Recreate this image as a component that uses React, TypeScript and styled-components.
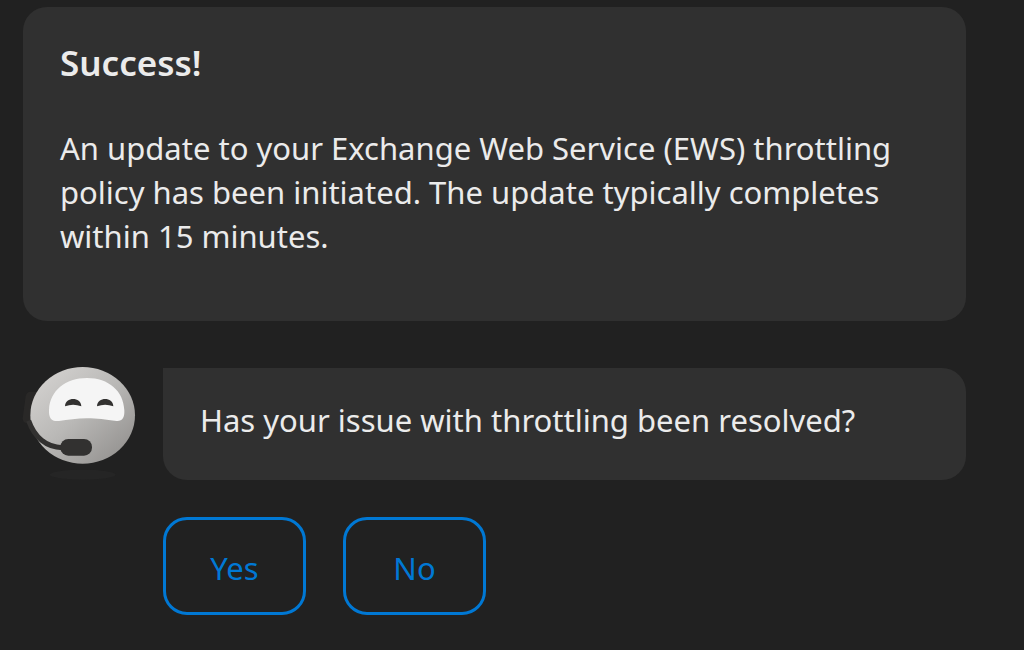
import React from 'react';
import styled, { createGlobalStyle } from 'styled-components';

const GlobalStyle = createGlobalStyle`
  * { box-sizing: border-box; }
  body {
    margin: 0;
    background: #212121;
    color: #ebebeb;
    font-family: 'Segoe UI', 'Noto Sans', 'Open Sans', sans-serif;
    font-size: 31px;
    line-height: 44px;
  }
`;

const Chat = styled.main`
  padding: 7px 58px 34px 23px;
`;

const Bubble = styled.section<{ $reply?: boolean }>`
  flex: 1;
  min-width: 0;
  padding: ${p => (p.$reply ? '30px 37px 38px' : '31px 37px 63px')};
  border-radius: ${p => (p.$reply ? '0 24px 24px 24px' : '24px')};
  background: #303030;
`;

const Title = styled.h1`
  margin: 0 0 38px;
  font-size: 35px;
  font-weight: 600;
  line-height: 50px;
`;

const Text = styled.p`
  margin: 0;
`;

const MessageRow = styled.div`
  display: flex;
  gap: 28px;
  margin-top: 47px;
`;

const Avatar = styled.svg`
  flex: none;
  width: 112px;
  height: 112px;
  overflow: visible;
`;

const Replies = styled.div`
  display: flex;
  gap: 37px;
  margin: 37px 0 0 140px;
`;

const ReplyButton = styled.button`
  min-width: 143px;
  height: 98px;
  padding: 4px 44px 0;
  border: 3px solid #0078d4;
  border-radius: 24px;
  background: transparent;
  color: #0078d4;
  font: inherit;
  cursor: pointer;
`;

const BotAvatar = () => (
  <Avatar viewBox="39 39 336 336" role="img" aria-label="Virtual agent">
    <defs>
      <linearGradient id="head" x1="0.1" y1="0.1" x2="0.85" y2="0.9">
        <stop offset="0" stopColor="#d2d0ce" />
        <stop offset="0.5" stopColor="#b9b8b6" />
        <stop offset="1" stopColor="#979593" />
      </linearGradient>
    </defs>
    <ellipse cx="218" cy="359" rx="99" ry="15" fill="#252525" />
    <path d="M62 110H84V204H50Q38 204 38 190L47 124Q49 110 62 110Z" fill="#292827" />
    <ellipse cx="218" cy="181" rx="157" ry="145" fill="url(#head)" />
    <path
      d="M117 164C120 107 166 69 231 69C296 69 341 108 343 166C344 188 337 199 320 198C286 194 262 190 231 190C200 190 174 195 147 198C123 200 116 188 117 164Z"
      fill="#f5f5f5"
    />
    <path d="M165 154C166 125 213 125 214 154Q189 145 165 154Z" fill="#323130" />
    <path d="M261 154C262 125 309 125 310 154Q285 145 261 154Z" fill="#323130" />
    <path d="M56 197C73 247 109 277 157 278" fill="none" stroke="#323130" strokeWidth="15" />
    <rect x="151" y="252" width="95" height="50" rx="24" fill="#323130" />
  </Avatar>
);

export default function App() {
  return (
    <>
      <GlobalStyle />
      <Chat>
        <Bubble>
          <Title>Success!</Title>
          <Text>
            An update to your Exchange Web Service (EWS) throttling policy has been initiated. The
            update typically completes within 15 minutes.
          </Text>
        </Bubble>
        <MessageRow>
          <BotAvatar />
          <Bubble $reply>
            <Text>Has your issue with throttling been resolved?</Text>
          </Bubble>
        </MessageRow>
        <Replies>
          <ReplyButton type="button">Yes</ReplyButton>
          <ReplyButton type="button">No</ReplyButton>
        </Replies>
      </Chat>
    </>
  );
}
